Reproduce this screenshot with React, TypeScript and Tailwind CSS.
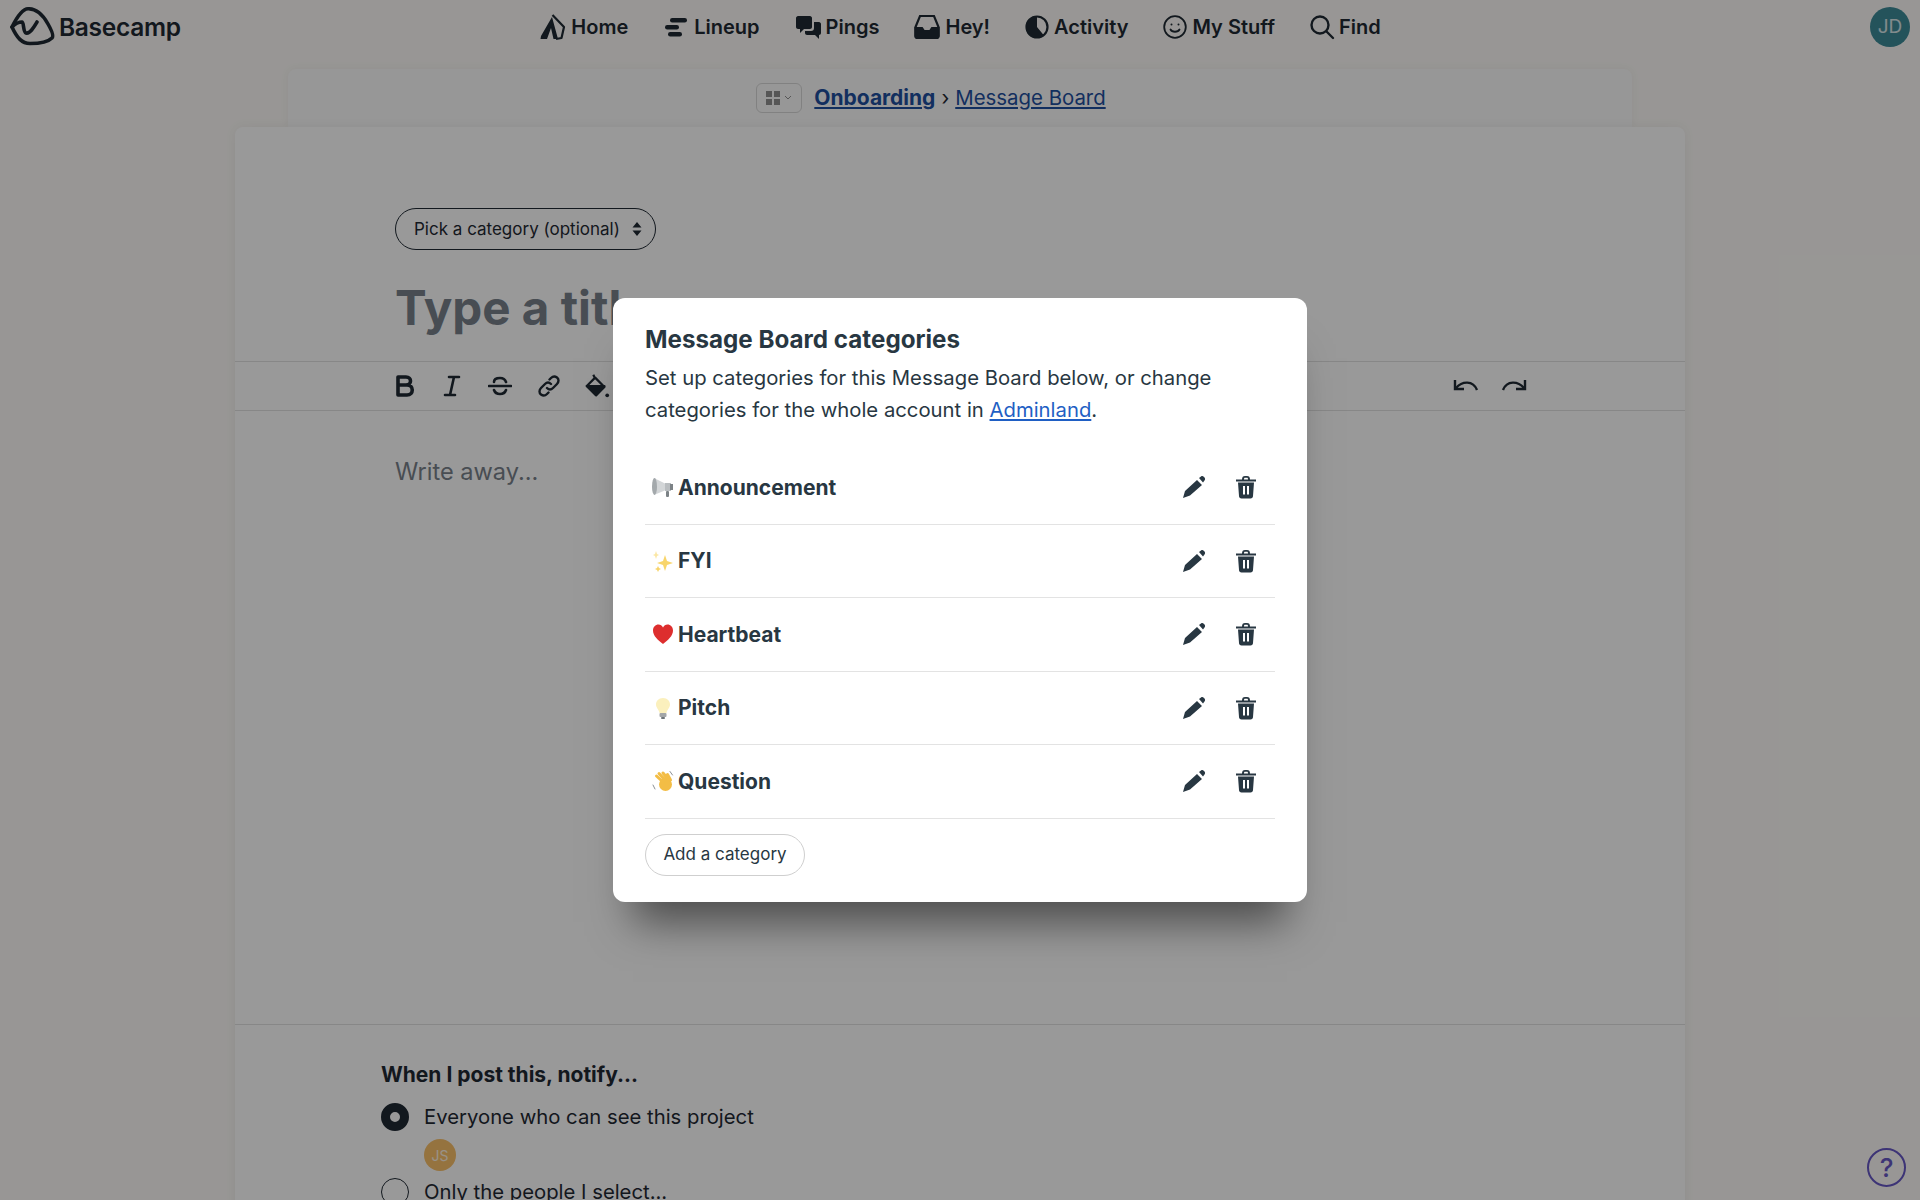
const font = "font-['Inter','Liberation_Sans',sans-serif]"

function Logo(){
    return (
        <svg width="46" height="40" viewBox="0 0 46 40" fill="none" stroke="#1f2933" strokeWidth="3.6" strokeLinecap="round" strokeLinejoin="round">
            <path d="M2 20C6 12 12 2 18 1.8C26 1.500 33 8 38 17C42 24 44 29 42 31C38 35 28 36.500 20 36.500C12 36.500 7 31 2 20Z"/>
            <path d="M2 20C5 17 9 15 12 15C14 15 13 25 16 26C20 27 24 20 27 15"/>
        </svg>
    )
}

function NavIcon({name}:{name:string}){
    if(name==="home") return (
        <svg width="28" height="28" viewBox="0 0 28 28" fill="#1f2933">
            <path d="M13 4L2 23L1.500 26L8 26L12 15L14.500 26H19Z"/>
            <path d="M13.500 2L25 14L22.500 25L17 26" fill="none" stroke="#1f2933" strokeWidth="2.2" strokeLinejoin="round"/>
        </svg>
    )
    if(name==="lineup") return (
        <svg width="28" height="28" viewBox="0 0 28 28" fill="#1f2933">
            <rect x="8" y="5" width="17" height="4.500" rx="2.200"/>
            <rect x="3" y="12" width="14" height="4.500" rx="2.200"/>
            <rect x="6" y="19" width="14" height="4.500" rx="2.200"/>
        </svg>
    )
    if(name==="pings") return (
        <svg width="28" height="28" viewBox="0 0 28 28" fill="#1f2933">
            <path d="M4 3H16C17 3 18 4 18 5V14C18 15 17 16 16 16H10L6 20V16H4C3 16 2 15 2 14V5C2 4 3 3 4 3Z"/>
            <path d="M20 9H25C26 9 27 10 27 11V20C27 21 26 22 25 22V26L21 22H13C12 22 11 21 11 20V18H17C19 18 20 17 20 15Z"/>
        </svg>
    )
    if(name==="hey") return (
        <svg width="28" height="28" viewBox="0 0 28 28" fill="none" stroke="#1f2933" strokeWidth="2.2">
            <path d="M7 3H21L25.500 14V23C25.500 24.500 24.500 25 23 25H5C3.500 25 2.500 24.500 2.500 23V14Z"/>
            <path d="M2.500 15H9L11 18H17L19 15H25.500V23C25.500 24.500 24.500 25 23 25H5C3.500 25 2.500 24.500 2.500 23Z" fill="#1f2933"/>
        </svg>
    )
    if(name==="activity") return (
        <svg width="26" height="26" viewBox="0 0 26 26">
            <circle cx="13" cy="13" r="10.500" fill="none" stroke="#1f2933" strokeWidth="2.2"/>
            <path d="M13 2A11 11 0 0 0 13 24A11 11 0 0 0 20 21.500L13 13Z" fill="#1f2933"/>
        </svg>
    )
    if(name==="stuff") return (
        <svg width="26" height="26" viewBox="0 0 26 26" fill="none" stroke="#1f2933" strokeWidth="1.8" strokeLinecap="round">
            <circle cx="13" cy="13" r="10.800"/>
            <circle cx="9.500" cy="10.500" r="1" fill="#1f2933" stroke="none"/>
            <circle cx="16.500" cy="10.500" r="1" fill="#1f2933" stroke="none"/>
            <path d="M8.500 15.500C10 18.500 16 18.500 17.500 15.500"/>
        </svg>
    )
    return (
        <svg width="26" height="26" viewBox="0 0 26 26" fill="none" stroke="#1f2933" strokeWidth="2.4" strokeLinecap="round">
            <circle cx="11" cy="11" r="8.500"/>
            <path d="M17.500 17.500L24 24"/>
        </svg>
    )
}

function NavItem({icon,label}:{icon:string,label:string}){
    return (
        <div className="flex items-center gap-[4px] text-[20px] font-semibold text-[#1f2933]">
            <NavIcon name={icon}/>
            <span>{label}</span>
        </div>
    )
}

function ToolIcon({name}:{name:string}){
    const c = "#1f2933"
    if(name==="bold") return (
        <svg width="22" height="24" viewBox="0 0 22 24" fill="none" stroke={c} strokeWidth="3.6" strokeLinejoin="round">
            <path d="M4 3H12C18 3 18 11 12 11H4ZM4 11H13C20 11 20 21 13 21H4Z"/>
        </svg>
    )
    if(name==="italic") return (
        <svg width="22" height="24" viewBox="0 0 22 24" fill="none" stroke={c} strokeWidth="2.6" strokeLinecap="round">
            <path d="M8 3H18M4 21H14M13 3L9 21"/>
        </svg>
    )
    if(name==="strike") return (
        <svg width="24" height="24" viewBox="0 0 24 24" fill="none" stroke={c} strokeWidth="2.6" strokeLinecap="round">
            <path d="M1 12H23M18 8C17 5 14 4 12 4C9 4 6 5 6 8M6 16C7 19 9 20 12 20C15 20 17 19 18 16"/>
        </svg>
    )
    if(name==="link") return (
        <svg width="24" height="24" viewBox="0 0 24 24" fill="none" stroke={c} strokeWidth="2.4" strokeLinecap="round">
            <path d="M10 14C12 16 14 16 16 14L20 10C22 8 22 5 20 3.500C18 2 16 2 14 4L12.500 5.500"/>
            <path d="M14 10C12 8 10 8 8 10L4 14C2 16 2 19 4 20.500C6 22 8 22 10 20L11.500 18.500"/>
        </svg>
    )
    if(name==="fill") return (
        <svg width="26" height="28" viewBox="0 0 28 28" fill="none" stroke={c} strokeWidth="2.4" strokeLinejoin="round" className="-ml-[2px]">
            <path d="M10 2L12 6M12 5L22 15L13 24L3 14Z"/>
            <path d="M3 14H22L13 24Z" fill={c}/>
            <circle cx="25" cy="24" r="2" fill={c} stroke="none"/>
        </svg>
    )
    if(name==="undo") return (
        <svg width="26" height="20" viewBox="0 -2 26 20" fill="none" stroke={c} strokeWidth="2.4">
            <path d="M2 2V11H11"/>
            <path d="M3 10C9 3 20 2 24 12"/>
        </svg>
    )
    return (
        <svg width="26" height="20" viewBox="0 -2 26 20" fill="none" stroke={c} strokeWidth="2.4">
            <path d="M24 2V11H15"/>
            <path d="M23 10C17 3 6 2 2 12"/>
        </svg>
    )
}

function Emoji({name}:{name:string}){
    if(name==="megaphone") return (
        <svg width="22" height="22" viewBox="0 0 22 22">
            <path d="M2 2L14 8V14L2 19Z" fill="#d3d6d8"/>
            <ellipse cx="2.500" cy="10.500" rx="2.500" ry="8.500" fill="#a4a9ac"/>
            <rect x="13" y="7" width="6" height="8" fill="#b9bdc0"/>
            <rect x="18" y="8" width="3" height="6" fill="#7c8286"/>
            <rect x="14" y="15" width="3" height="6" rx="1" fill="#7c8286"/>
        </svg>
    )
    if(name==="sparkles") return (
        <svg width="22" height="22" viewBox="0 0 22 22" fill="#f8d56b">
            <path d="M13 5L15 11L21 13L15 15L13 21L11 15L5 13L11 11Z"/>
            <path d="M4 1L5 4L7 5L5 6L4 9L3 6L1 5L3 4Z" fill="#fbe7a5"/>
            <path d="M6 16L7 18L9 19L7 20L6 22L5 20L3 19L5 18Z"/>
        </svg>
    )
    if(name==="heart") return (
        <svg width="22" height="22" viewBox="0 0 22 22" fill="#dd2e2e">
            <path d="M11 21C6 17 1 13 1 7.500C1 4 3.500 1.500 6.500 1.500C8.500 1.500 10 2.500 11 4.500C12 2.500 13.500 1.500 15.500 1.500C18.500 1.500 21 4 21 7.500C21 13 16 17 11 21Z"/>
        </svg>
    )
    if(name==="bulb") return (
        <svg width="22" height="22" viewBox="0 0 22 22">
            <path d="M11 1C6.500 1 4 4 4 7.500C4 11 7 12.500 7.500 16H14.500C15 12.500 18 11 18 7.500C18 4 15.500 1 11 1Z" fill="#fbf0bd"/>
            <rect x="7.500" y="16" width="7" height="4" rx="1" fill="#a3a6a8"/>
            <rect x="9" y="20" width="4" height="2" rx="1" fill="#6d7377"/>
        </svg>
    )
    return (
        <svg width="22" height="22" viewBox="0 0 22 22" fill="none" strokeLinecap="round">
            <ellipse cx="13.500" cy="14.500" rx="6.500" ry="6.500" fill="#f3bd45"/>
            <path d="M11 12L4.500 6M13 10L7 3.500M16 9L11 3M18.500 10L15.500 4.500" stroke="#f3bd45" strokeWidth="3"/>
            <path d="M1 15L3 19M18 1.500L20.500 5" stroke="#8b9094" strokeWidth="1"/>
        </svg>
    )
}

const categories = [
    {emoji:"megaphone",name:"Announcement"},
    {emoji:"sparkles",name:"FYI"},
    {emoji:"heart",name:"Heartbeat"},
    {emoji:"bulb",name:"Pitch"},
    {emoji:"wave",name:"Question"},
]

function CategoryRow({emoji,name}:{emoji:string,name:string}){
    return (
        <div className="flex h-[73.5px] items-center border-b border-[#e3e3e3] pl-[7px] pr-[18px]">
            <Emoji name={emoji}/>
            <span className="ml-[4px] flex-1 text-[21px] font-bold text-[#283742]">{name}</span>
            <svg width="24" height="24" viewBox="0 0 24 24" fill="#283742" className="mr-[29px]">
                <path d="M1 23L3 16L15 5L20 10L8 20.500ZM17 3L19 1.500C20 .8 21 1 22 2L22.500 2.500C23.300 3.500 23.300 4.500 22.500 5.500L21 7.500Z"/>
            </svg>
            <svg width="22" height="24" viewBox="0 0 22 24" fill="#283742">
                <path d="M1 4.500H21V6.500H1ZM7 4.500C7 2 8 1 10 1H12C14 1 15 2 15 4.500H13C13 3 12.500 2.800 12 2.800H10C9.500 2.800 9 3 9 4.500Z"/>
                <path d="M3 7.500H19L18 21C18 22.500 17 23.500 15.500 23.500H6.500C5 23.500 4 22.500 4 21ZM8 11V19.500H10V11ZM12 11V19.500H14V11Z" fillRule="evenodd"/>
            </svg>
        </div>
    )
}

export default function App(){
    return (
        <div className={`relative h-[1200px] overflow-hidden bg-[#fdfbf8] ${font} text-[#1f2933]`}>

            <header className="grid h-[54px] grid-cols-[1fr_auto_1fr] items-center px-[10px]">
                <div className="flex items-center gap-[3px]">
                    <Logo/>
                    <span className="text-[24.5px] font-semibold tracking-[-0.3px]">Basecamp</span>
                </div>
                <nav className="flex items-center gap-[34px]">
                    <NavItem icon="home" label="Home"/>
                    <NavItem icon="lineup" label="Lineup"/>
                    <NavItem icon="pings" label="Pings"/>
                    <NavItem icon="hey" label="Hey!"/>
                    <NavItem icon="activity" label="Activity"/>
                    <NavItem icon="stuff" label="My Stuff"/>
                    <NavItem icon="find" label="Find"/>
                </nav>
                <div className="flex justify-end">
                    <div className="flex h-[40px] w-[40px] items-center justify-center rounded-full bg-[#3d8a98] text-[19px] text-white/80">JD</div>
                </div>
            </header>

            <div className="mx-auto mt-[15px] flex h-[58px] w-[1344px] items-start justify-center rounded-t-lg bg-[#fcfcfc] pr-[58px] pt-[14px] shadow-[0_0_10px_rgba(0,0,0,0.05)]">
                <div className="flex h-[30px] w-[46px] items-center justify-center gap-[3px] rounded-md border border-[#d8d8d8]">
                    <svg width="14" height="14" viewBox="0 0 14 14" fill="#8f8f8f">
                        <rect x="0" y="0" width="6" height="6"/><rect x="8" y="0" width="6" height="6"/>
                        <rect x="0" y="8" width="6" height="6"/><rect x="8" y="8" width="6" height="6"/>
                    </svg>
                    <svg width="10" height="8" viewBox="0 0 10 8" fill="none" stroke="#8f8f8f" strokeWidth="1"><path d="M2 2L5 5L8 2"/></svg>
                </div>
                <div className="ml-[12px] flex items-center text-[20.4px] leading-[30px] text-[#1f4f9e]">
                    <a className="text-[21px] font-bold underline">Onboarding</a>
                    <span className="mx-[6px] text-[#1f2933]">›</span>
                    <a className="underline">Message Board</a>
                </div>
            </div>

            <main className="relative mx-auto h-[1100px] w-[1450px] rounded-t-lg bg-white pt-[81px] shadow-[0_0_12px_rgba(0,0,0,0.06)]">
                <div className="pl-[160px]">
                    <div className="flex h-[42px] w-[261px] items-center justify-between rounded-full border border-[#1f2933] pl-[18px] pr-[13px] text-[17px]">
                        <span className="translate-y-px">Pick a category (optional)</span>
                        <svg width="10" height="16" viewBox="0 0 10 16" fill="#1f2933">
                            <path d="M5 1L9.500 6.500H.5ZM5 15L.5 9.500H9.500Z"/>
                        </svg>
                    </div>
                    <div className="mt-[28px] text-[47.5px] font-bold leading-[60px] text-[#78818a]">Type a title…</div>
                </div>

                <div className="mt-[23px] flex h-[50px] items-center justify-between border-y border-[#e2e2e2] pl-[159px] pr-[158px]">
                    <div className="flex items-center gap-[25px]">
                        <ToolIcon name="bold"/>
                        <ToolIcon name="italic"/>
                        <ToolIcon name="strike"/>
                        <ToolIcon name="link"/>
                        <ToolIcon name="fill"/>
                    </div>
                    <div className="flex items-center gap-[22px]">
                        <ToolIcon name="undo"/>
                        <ToolIcon name="redo"/>
                    </div>
                </div>

                <div className="h-[614px] border-b border-[#e2e2e2] pl-[160px] pt-[43px] text-[23.6px] leading-[36px] text-[#78818a]">
                    Write away...
                </div>

                <div className="pl-[146px] pt-[36px]">
                    <h3 className="text-[21px] font-bold leading-[28px]">When I post this, notify...</h3>
                    <div className="mt-[13px] flex items-center gap-[15px] text-[20.3px] leading-[30px]">
                        <span className="box-border h-[28px] w-[28px] rounded-full border-[9px] border-[#1f2933] bg-white"></span>
                        <span>Everyone who can see this project</span>
                    </div>
                    <div className="ml-[43px] mt-[7px] flex h-[32px] w-[32px] items-center justify-center rounded-full bg-[#f9c06a] text-[14px] text-white/80">JS</div>
                    <div className="mt-[6px] flex items-center gap-[15px] text-[20.3px] leading-[30px]">
                        <span className="box-border h-[28px] w-[28px] rounded-full border border-[#1f2933] bg-white"></span>
                        <span>Only the people I select...</span>
                    </div>
                </div>
            </main>

            <div className="absolute inset-0 flex items-start justify-center bg-black/40 pt-[298px]">
                <div className="box-border h-[604px] w-[694px] rounded-xl bg-white px-[32px] pt-[26px] text-[#283742] shadow-[0_40px_40px_-20px_rgba(0,0,0,0.5)]">
                    <h2 className="text-[24.2px] font-bold leading-[32px]">Message Board categories</h2>
                    <p className="mt-[6px] text-[20.3px] leading-[32px]">
                        Set up categories for this Message Board below, or change categories for the whole account in <a className="text-[#1f5fc4] underline">Adminland</a>.
                    </p>
                    <div className="mt-[25px]">
                        {categories.map((c)=>(
                            <CategoryRow key={c.name} emoji={c.emoji} name={c.name}/>
                        ))}
                    </div>
                    <button className="mt-[15px] h-[42px] w-[160px] rounded-full border border-[#cfcfcf] bg-white text-[17px] text-[#283742]">
                        Add a category
                    </button>
                </div>
            </div>

            <div className="absolute bottom-[13px] right-[14px] flex h-[39px] w-[39px] items-center justify-center rounded-full border-[2px] border-[#3d3476] text-[26px] font-medium text-[#3d3476]">?</div>
        </div>
    )
}
